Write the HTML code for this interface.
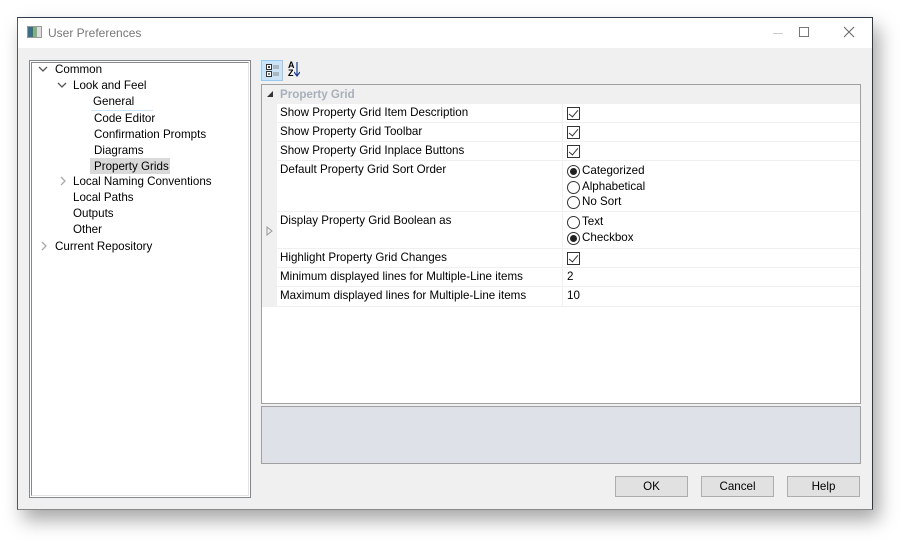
<!DOCTYPE html>
<html><head><meta charset="utf-8"><style>
*{box-sizing:border-box;margin:0;padding:0}
body{width:921px;height:558px;background:#fff;position:relative;overflow:hidden;font-family:"Liberation Sans",sans-serif;font-size:11.6px;color:#000}
.abs{position:absolute}
#win{left:17px;top:17px;width:856px;height:493px;background:#f0f0f0;border:1px solid #2b3a4a;border-bottom-color:#888;border-left-color:#555;box-shadow:6px 10px 18px rgba(0,0,0,.35)}
#title{left:0;top:0;width:854px;height:30px;background:#fff}
.t{position:absolute;white-space:nowrap;line-height:14px}
.row{position:absolute;left:15px;width:583px;border-bottom:1px solid #f0f0f0;background:#fff}
.row .l{position:absolute;left:3px;top:2px}
.row .v{position:absolute;left:285px;top:0;bottom:0;border-left:1px solid #f0f0f0}
.cb{position:absolute;width:13px;height:13px;border:1px solid #333;background:#fff}
.cb:after{content:"";position:absolute;left:3px;top:0px;width:4px;height:8px;border-right:1.5px solid #333;border-bottom:1.5px solid #333;transform:rotate(40deg)}
.rb{position:absolute;width:13px;height:13px;border:1px solid #333;border-radius:50%;background:#fff}
.rb.on:after{content:"";position:absolute;left:2px;top:2px;width:7px;height:7px;border-radius:50%;background:#222}
.btn{position:absolute;top:458px;width:73px;height:21px;background:#e1e1e1;border:1px solid #adadad;text-align:center;line-height:19px}
</style></head><body>
<div id="win" class="abs">
 <div id="title" class="abs">
  <div class="abs" style="left:9px;top:8px;width:15px;height:12px;border:1px solid #999;background:linear-gradient(90deg,#3b6c8a 0 40%,#7fb07f 40% 70%,#ddd 70%)"></div>
  <div class="t" style="left:30px;top:8px;color:#777;font-size:12px">User Preferences</div>
  <div class="abs" style="left:755px;top:15px;width:10px;height:1px;background:#ccc"></div>
  <div class="abs" style="left:781px;top:9px;width:10px;height:10px;border:1px solid #777"></div>
  <svg class="abs" style="left:825px;top:8px" width="12" height="12"><path d="M1 1L11 11M11 1L1 11" stroke="#666" stroke-width="1"/></svg>
 </div>
 <div class="abs" style="left:11px;top:42px;width:222px;height:438px;border:1px solid #828790;background:#fff">
  <div class="abs" style="left:1px;top:1px;width:218px;height:434px;border:1px solid #e3e3e3;border-left-color:#888;border-top-color:#888"></div>
  <svg class="abs" style="left:8px;top:5px" width="10" height="8"><path d="M1 1L5 5L9 1" fill="none" stroke="#555" stroke-width="1.3"/></svg>
  <div class="t" style="left:25px;top:2px">Common</div>
  <svg class="abs" style="left:27px;top:21px" width="10" height="8"><path d="M1 1L5 5L9 1" fill="none" stroke="#555" stroke-width="1.3"/></svg>
  <div class="t" style="left:43px;top:18px">Look and Feel</div>
  <div class="t" style="left:63px;top:34px">General</div>
  <div class="abs" style="left:61px;top:49px;width:62px;height:1px;background:#cce4f7"></div>
  <div class="t" style="left:64px;top:51px">Code Editor</div>
  <div class="t" style="left:64px;top:67px">Confirmation Prompts</div>
  <div class="t" style="left:64px;top:83px">Diagrams</div>
  <div class="abs" style="left:60px;top:97px;width:80px;height:16px;background:#d9d9d9"></div>
  <div class="t" style="left:64px;top:99px">Property Grids</div>
  <svg class="abs" style="left:29px;top:115px" width="8" height="10"><path d="M2 1L6 5L2 9" fill="none" stroke="#aaa" stroke-width="1.3"/></svg>
  <div class="t" style="left:43px;top:114px">Local Naming Conventions</div>
  <div class="t" style="left:43px;top:130px">Local Paths</div>
  <div class="t" style="left:43px;top:146px">Outputs</div>
  <div class="t" style="left:43px;top:162px">Other</div>
  <svg class="abs" style="left:10px;top:180px" width="8" height="10"><path d="M2 1L6 5L2 9" fill="none" stroke="#aaa" stroke-width="1.3"/></svg>
  <div class="t" style="left:25px;top:179px">Current Repository</div>
 </div>
 <div class="abs" style="left:243px;top:42px;width:22px;height:21px;background:#cce4f7;border:1px solid #99c9ef"></div>
 <svg class="abs" style="left:248px;top:46px" width="14" height="14"><rect x="0.5" y="0.5" width="5" height="5" fill="#fff" stroke="#333"/><rect x="0.5" y="7.5" width="5" height="5" fill="#fff" stroke="#333"/><path d="M2 3H4M3 2V4M2 10H4" stroke="#000"/><path d="M7 2H13M7 4H13M7 9H13M7 11H13" stroke="#888"/></svg>
 <div class="t" style="left:270px;top:43px;font-size:9px;line-height:8px;font-weight:bold">A<br>Z</div>
 <svg class="abs" style="left:276px;top:44px" width="6" height="15"><path d="M3 0V13M0 10L3 14L6 10" fill="none" stroke="#1a3d8f" stroke-width="1.2"/></svg>
 <div class="abs" style="left:243px;top:66px;width:600px;height:320px;border:1px solid #a0a0a0;background:#fff">
  <div class="abs" style="left:0;top:0;width:15px;height:222px;background:#f0f0f0"></div>
  <div class="abs" style="left:0;top:0;width:598px;height:19px;background:#f0f0f0"></div>
  <svg class="abs" style="left:5px;top:6px" width="7" height="7"><path d="M6 0V6H0Z" fill="#333"/></svg>
  <div class="t" style="left:18px;top:3px;color:#a8b0bc;font-weight:bold">Property Grid</div>
  <svg class="abs" style="left:4px;top:141px" width="7" height="10"><path d="M1 1L6 5L1 9Z" fill="none" stroke="#999"/></svg>
  <div class="row" style="top:19px;height:19px"><div class="l">Show Property Grid Item Description</div><div class="v"><div class="cb" style="left:4px;top:3px"></div></div></div>
  <div class="row" style="top:38px;height:19px"><div class="l">Show Property Grid Toolbar</div><div class="v"><div class="cb" style="left:4px;top:3px"></div></div></div>
  <div class="row" style="top:57px;height:19px"><div class="l">Show Property Grid Inplace Buttons</div><div class="v"><div class="cb" style="left:4px;top:3px"></div></div></div>
  <div class="row" style="top:76px;height:51px"><div class="l">Default Property Grid Sort Order</div><div class="v">
   <div class="rb on" style="left:4px;top:4px"></div><div class="t" style="left:19px;top:3px">Categorized</div>
   <div class="rb" style="left:4px;top:20px"></div><div class="t" style="left:19px;top:19px">Alphabetical</div>
   <div class="rb" style="left:4px;top:35px"></div><div class="t" style="left:19px;top:34px">No Sort</div></div></div>
  <div class="row" style="top:127px;height:37px"><div class="l">Display Property Grid Boolean as</div><div class="v">
   <div class="rb" style="left:4px;top:4px"></div><div class="t" style="left:19px;top:3px">Text</div>
   <div class="rb on" style="left:4px;top:20px"></div><div class="t" style="left:19px;top:19px">Checkbox</div></div></div>
  <div class="row" style="top:164px;height:19px"><div class="l">Highlight Property Grid Changes</div><div class="v"><div class="cb" style="left:4px;top:3px"></div></div></div>
  <div class="row" style="top:183px;height:19px"><div class="l">Minimum displayed lines for Multiple-Line items</div><div class="v"><div class="t" style="left:4px;top:2px">2</div></div></div>
  <div class="row" style="top:202px;height:20px"><div class="l">Maximum displayed lines for Multiple-Line items</div><div class="v"><div class="t" style="left:4px;top:2px">10</div></div></div>
 </div>
 <div class="abs" style="left:243px;top:388px;width:600px;height:58px;background:#dfe1e8;border:1px solid #a0a0a0"></div>
 <div class="btn" style="left:597px">OK</div>
 <div class="btn" style="left:683px">Cancel</div>
 <div class="btn" style="left:769px">Help</div>
</div>
</body></html>
